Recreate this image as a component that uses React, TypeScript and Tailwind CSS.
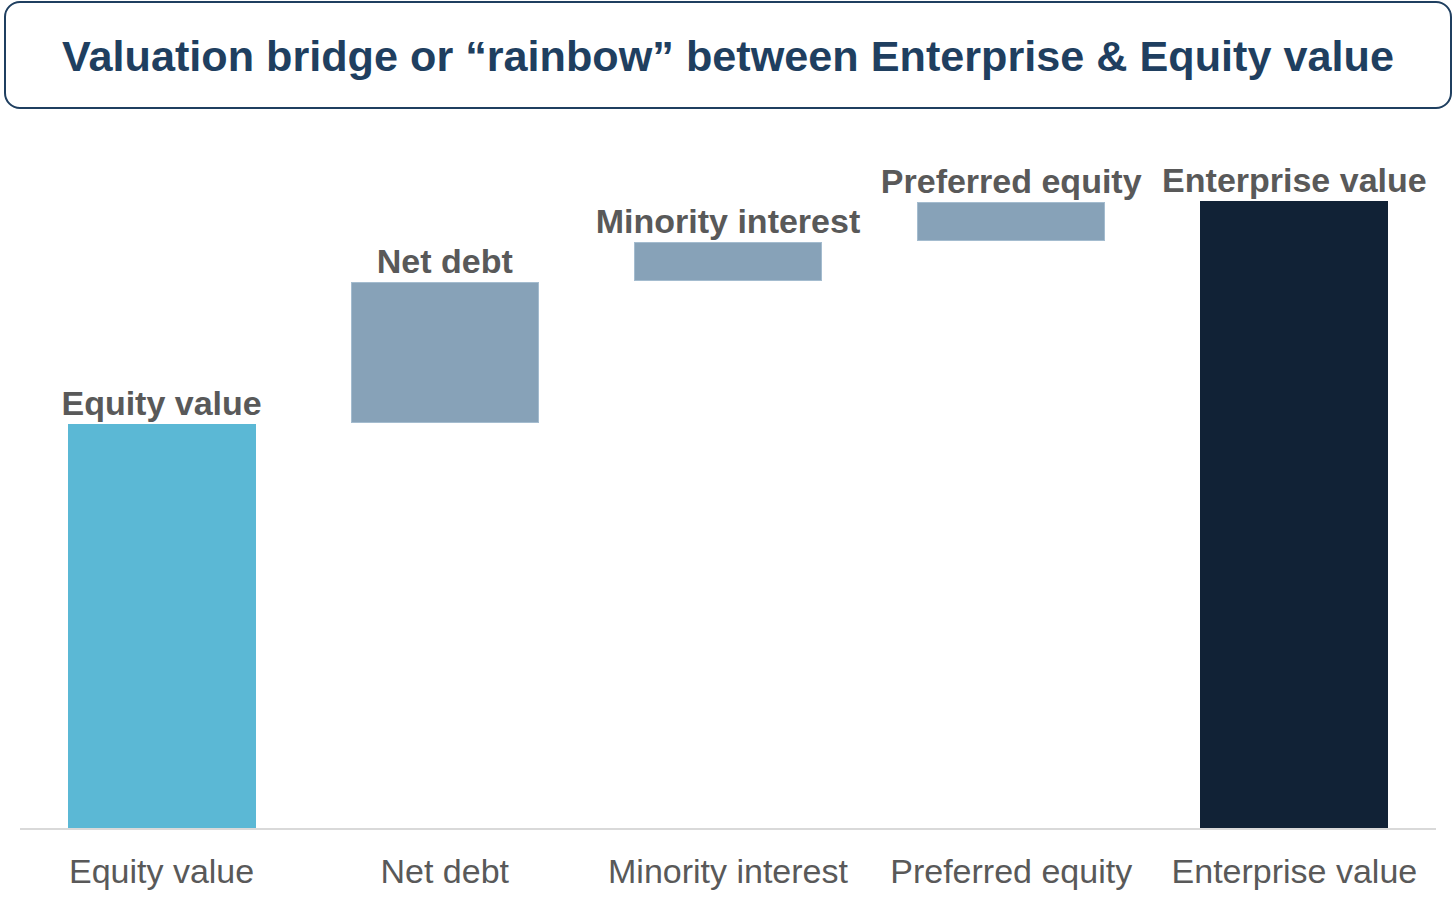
const bars = [
  { name: "Equity value", height: 404, offset: 0, color: "bg-[#5bb8d5]" },
  { name: "Net debt", height: 141, offset: 405, color: "bg-[#87a2b8] border border-[#a4bccf]" },
  { name: "Minority interest", height: 39, offset: 547, color: "bg-[#87a2b8] border border-[#a4bccf]" },
  { name: "Preferred equity", height: 39, offset: 587, color: "bg-[#87a2b8] border border-[#a4bccf]" },
  { name: "Enterprise value", height: 627, offset: 0, color: "bg-[#112236]" },
]

export default function App() {
  return (
    <div
      className="w-[1456px] h-[908px] bg-white overflow-hidden"
      style={{ fontFamily: '"Liberation Sans", Arial, sans-serif' }}
    >
      <div className="mx-[4px] mt-[1px] h-[108px] pt-[4px] rounded-[16px] border-2 border-[#1f3f60] flex items-center justify-center">
        <h1 className="text-[43.2px] font-bold leading-none text-[#1f3f60] whitespace-nowrap">
          Valuation bridge or “rainbow” between Enterprise &amp; Equity value
        </h1>
      </div>

      <div className="ml-[20px] w-[1416px] h-[719px] grid grid-cols-5">
        {bars.map((b) => (
          <div key={b.name} className="flex flex-col items-center justify-end">
            <span className="mb-[4px] text-[34px] font-bold leading-none text-[#595959] whitespace-nowrap">
              {b.name}
            </span>
            <div className={`w-[188px] ${b.color}`} style={{ height: b.height }} />
            <div style={{ height: b.offset }} />
          </div>
        ))}
      </div>
      <div className="ml-[20px] w-[1416px] h-[2px] bg-[#d9d9d9]" />

      <div className="ml-[20px] w-[1416px] mt-[24px] grid grid-cols-5">
        {bars.map((b) => (
          <span key={b.name} className="text-center text-[34px] leading-none text-[#595959] whitespace-nowrap">
            {b.name}
          </span>
        ))}
      </div>
    </div>
  )
}
